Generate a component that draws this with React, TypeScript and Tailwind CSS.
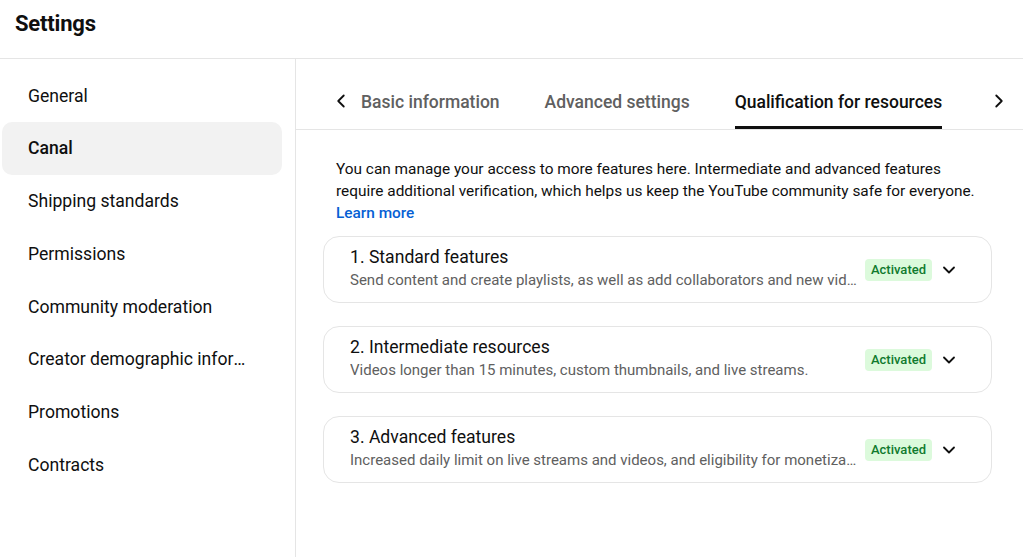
import { ChevronDown, ChevronLeft, ChevronRight } from 'lucide-react';

const navItems = [
  'General',
  'Canal',
  'Shipping standards',
  'Permissions',
  'Community moderation',
  'Creator demographic information',
  'Promotions',
  'Contracts',
];

const tabs = ['Basic information', 'Advanced settings', 'Qualification for resources'];

const features = [
  {
    title: '1. Standard features',
    desc: 'Send content and create playlists, as well as add collaborators and new videos to your channel.',
  },
  {
    title: '2. Intermediate resources',
    desc: 'Videos longer than 15 minutes, custom thumbnails, and live streams.',
  },
  {
    title: '3. Advanced features',
    desc: 'Increased daily limit on live streams and videos, and eligibility for monetization.',
  },
];

export default function App() {
  return (
    <div className="flex h-[557px] w-[1023px] flex-col overflow-hidden bg-white font-['Roboto',sans-serif] text-[#0f0f0f]">
      {/* Header */}
      <header className="h-[59px] shrink-0 border-b border-[#e5e5e5] pl-[15px] pt-[10px]">
        <h1 className="text-[22px] font-bold leading-[28px] tracking-[-0.2px]">Settings</h1>
      </header>

      <div className="flex min-h-0 flex-1">
        {/* Sidebar */}
        <nav className="w-[296px] shrink-0 border-r border-[#e5e5e5] pt-[10.5px] pl-[2px]">
          {navItems.map((item) => (
            <div
              key={item}
              className={`flex h-[52.75px] w-[280px] items-center rounded-[10px] pl-[26px] pr-[36px] text-[17.6px] ${
                item === 'Canal' ? 'bg-[#f2f2f2] font-medium' : ''
              }`}
            >
              <span className="truncate">{item}</span>
            </div>
          ))}
        </nav>

        {/* Main */}
        <main className="min-w-0 flex-1">
          <div className="flex h-[71px] items-stretch border-b border-[#e5e5e5] pl-[34px]">
            <div className="flex items-center pr-[9px] pt-[14px]">
              <ChevronLeft className="h-[22px] w-[22px]" strokeWidth={2} />
            </div>
            <div className="flex gap-[45px]">
              {tabs.map((tab) => {
                const active = tab === 'Qualification for resources';
                return (
                  <div
                    key={tab}
                    className={`flex items-end border-b-[3px] pb-[12px] text-[17.5px] font-medium leading-[24px] ${
                      active ? 'border-[#0f0f0f] text-[#0f0f0f]' : 'border-transparent text-[#606060]'
                    }`}
                  >
                    {tab}
                  </div>
                );
              })}
            </div>
            <div className="ml-auto flex items-center pr-[13px] pt-[14px]">
              <ChevronRight className="h-[22px] w-[22px]" strokeWidth={2} />
            </div>
          </div>

          <div className="pl-[27px] pr-[31px] pt-[28px]">
            <p className="max-w-[670px] pl-[13px] text-[15.4px] leading-[22px]">
              You can manage your access to more features here. Intermediate and advanced features{' '}
              <br />
              require additional verification, which helps us keep the YouTube community safe for everyone.
              <br />
              <a className="font-medium text-[#065fd4]" href="#">
                Learn more
              </a>
            </p>

            <div className="mt-[12px] flex flex-col gap-[23px]">
              {features.map((f) => (
                <div
                  key={f.title}
                  className="flex h-[67px] items-center rounded-[16px] border border-[#e5e5e5] pl-[26px] pr-[32px]"
                >
                  <div className="min-w-0 flex-1 self-start pt-[9px]">
                    <div className="text-[17.6px] leading-[22px]">{f.title}</div>
                    <div className="mt-[2px] truncate text-[15px] leading-[21px] text-[#606060]">{f.desc}</div>
                  </div>
                  <span className="ml-[4px] rounded-[4px] bg-[#dcfadc] px-[6px] py-[2px] text-[13px] font-medium leading-[18px] text-[#107a2e]">
                    Activated
                  </span>
                  <ChevronDown className="ml-[7px] h-[20px] w-[20px]" strokeWidth={2.2} />
                </div>
              ))}
            </div>
          </div>
        </main>
      </div>
    </div>
  );
}
